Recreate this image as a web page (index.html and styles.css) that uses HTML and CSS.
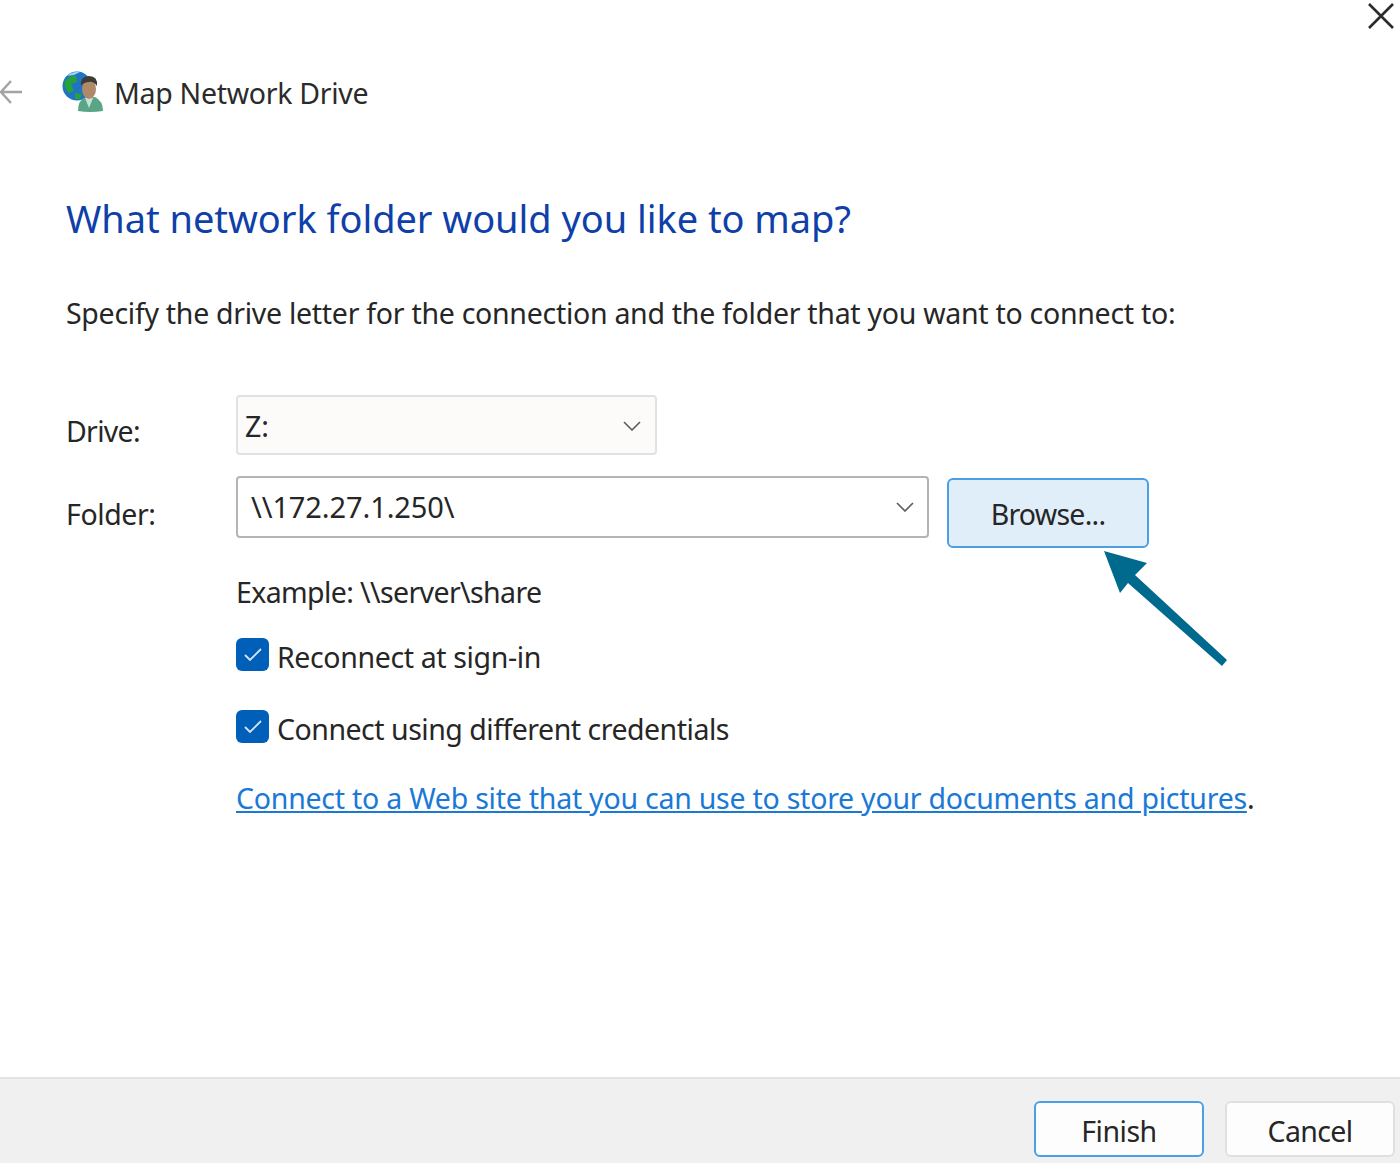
FILE: index.html
```html
<!DOCTYPE html>
<html lang="en">
<head>
<meta charset="utf-8">
<title>Map Network Drive</title>
<link rel="stylesheet" href="styles.css">
</head>
<body>
<div class="window">
  <div class="main">
    <div class="closebar">
      <svg class="close-icon" width="30" height="30" viewBox="0 0 30 30"><path d="M3 3 L27 27 M27 3 L3 27" fill="none" stroke="#2b2b2b" stroke-width="2.6"/></svg>
    </div>
    <div class="nav">
      <svg class="back-icon" width="24" height="28" viewBox="0 0 24 28"><path d="M22 14 H1 M11 3 L1 14 L11 25" fill="none" stroke="#a3a3a3" stroke-width="2.4"/></svg>
      <svg class="net-icon" width="42" height="42" viewBox="0 0 42 42">
        <circle cx="15" cy="15" r="14.5" fill="#1f74c4"/>
        <path d="M3 10 Q8 4 14 5 L15 11 L9 13 L12 20 L7 22 Q1 16 3 10Z M13 22 L20 23 L18 28 L13 28Z" fill="#27a13c"/>
        <path d="M5 5 Q11 0 18 1 L12 4Z" fill="#9fd0f0"/>
        <path d="M16 40 Q16 30 22 27 L33 26 Q41 30 41 40 Q28 42 16 40Z" fill="#5aa588"/>
        <path d="M23 27 L27 37 L31 27Z" fill="#c8e0d5"/>
        <ellipse cx="27" cy="18" rx="7" ry="10" fill="#b08a68"/>
        <path d="M19 15 Q18 5 27 5 Q36 5 35 15 Q31 10 27 11 Q22 11 19 15Z" fill="#3d3d38"/>
      </svg>
      <span class="nav-title">Map Network Drive</span>
    </div>
    <h1 class="heading">What network folder would you like to map?</h1>
    <p class="intro">Specify the drive letter for the connection and the folder that you want to connect to:</p>
    <div class="form">
      <label class="label label-drive">Drive:</label>
      <div class="select select-drive">
        <span class="select-value">Z:</span>
        <svg class="chevron" width="18" height="10" viewBox="0 0 18 10"><path d="M1 1 L9 9 L17 1" fill="none" stroke="#5c5c5c" stroke-width="1.6"/></svg>
      </div>
      <span></span>
      <label class="label label-folder">Folder:</label>
      <div class="select select-folder">
        <span class="select-value path">\\172.27.1.250\</span>
        <svg class="chevron" width="18" height="10" viewBox="0 0 18 10"><path d="M1 1 L9 9 L17 1" fill="none" stroke="#5c5c5c" stroke-width="1.6"/></svg>
      </div>
      <button class="btn btn-browse">Browse...</button>
    </div>
    <div class="options">
      <p class="example">Example: \\server\share</p>
      <div class="check-row check-first">
        <span class="check"><svg width="20" height="16" viewBox="0 0 20 16"><path d="M2 8 L7 13 L18 2" fill="none" stroke="#d5e4f5" stroke-width="1.8"/></svg></span>
        <span class="reconnect">Reconnect at sign-in</span>
      </div>
      <div class="check-row check-second">
        <span class="check"><svg width="20" height="16" viewBox="0 0 20 16"><path d="M2 8 L7 13 L18 2" fill="none" stroke="#d5e4f5" stroke-width="1.8"/></svg></span>
        <span class="credentials">Connect using different credentials</span>
      </div>
      <p class="link-line"><a class="link" href="#">Connect to a Web site that you can use to store your documents and pictures</a>.</p>
    </div>
    <svg class="arrow" width="130" height="120" viewBox="0 0 130 120">
      <path d="M1 2 L44 14 L32 26 L124 111 L119 117 L25 34 L17 44Z" fill="#006a8e"/>
    </svg>
  </div>
  <div class="footer">
    <button class="btn btn-finish">Finish</button>
    <button class="btn btn-cancel">Cancel</button>
  </div>
</div>
</body>
</html>
```

FILE: styles.css
```css
* { box-sizing: border-box; }
html, body { margin: 0; padding: 0; background: #fff; }
body {
  font-family: "Noto Sans", "Open Sans", "Liberation Sans", sans-serif;
  font-size: 28.5px;
  color: #262626;
}
.window {
  width: 1400px;
  height: 1163px;
  display: flex;
  flex-direction: column;
  overflow: hidden;
}
.main { flex: 1; position: relative; }
.closebar { display: flex; justify-content: flex-end; height: 32px; padding-right: 4px; }
.close-icon { margin-top: 1px; }
.nav { display: flex; align-items: center; height: 42px; margin-top: 39px; }
.back-icon { margin-right: 38px; }
.net-icon { margin-right: 10px; filter: blur(0.5px); }
.nav-title { font-size: 28.5px; letter-spacing: -0.3px; color: #2b2b2b; padding-top: 2px; }
.heading {
  margin: 79px 0 0;
  padding: 0 0 0 66px;
  font-weight: 400;
  font-size: 38px;
  letter-spacing: -0.05px;
  line-height: 52px;
  color: #0f3fa8;
}
.intro { margin: 49px 0 0 66px; font-size: 28.5px; letter-spacing: -0.28px; line-height: 40px; }
.form {
  display: grid;
  grid-template-columns: 170px 693px 220px;
  margin: 62px 0 0 66px;
}
.label { font-size: 28.5px; line-height: 40px; }
.label-drive { margin-top: 16px; letter-spacing: -0.7px; }
.label-folder { margin-top: 39px; letter-spacing: -0.4px; }
.select {
  display: flex;
  align-items: center;
  justify-content: space-between;
  background: #fff;
  border-radius: 4px;
}
.select-drive {
  width: 421px;
  height: 60px;
  background: #fcfbfa;
  border: 2px solid #e2e2e2;
  padding: 2px 14px 0 7px;
}
.select-folder {
  margin-top: 21px;
  height: 62px;
  border: 2px solid #b4b4b4;
  padding: 0 13px 0 13px;
}
.select-value { font-size: 28.5px; line-height: 40px; }
.path { font-size: 29px; letter-spacing: -0.1px; }
.btn {
  font-family: inherit;
  font-size: 28.5px;
  color: #262626;
  border-radius: 6px;
  padding: 0;
  background: #fdfdfd;
}
.btn-browse {
  margin: 23px 0 0 18px;
  width: 202px;
  height: 70px;
  padding-top: 2px;
  background: #e0eef9;
  border: 2px solid #4d9fe3;
  letter-spacing: -0.75px;
}
.options { margin: 0 0 0 236px; }
.example { margin: 0; padding-top: 24px; font-size: 28.5px; letter-spacing: -0.62px; line-height: 40px; }
.check-row { display: flex; align-items: center; gap: 8px; font-size: 28.5px; line-height: 40px; }
.reconnect { letter-spacing: -0.37px; }
.credentials { letter-spacing: -0.49px; }
.check-first { margin-top: 25px; }
.check-second { margin-top: 32px; }
.check {
  width: 33px;
  height: 33px;
  margin-bottom: 5px;
  border-radius: 6px;
  background: #005fb8;
  display: flex;
  align-items: center;
  justify-content: center;
}
.link-line { margin: 29px 0 0; font-size: 28.5px; letter-spacing: -0.24px; line-height: 40px; white-space: nowrap; }
.link { color: #1a79d6; text-decoration: underline; }
.arrow { position: absolute; left: 1103px; top: 549px; }
.footer {
  height: 86px;
  background: #f0f0f0;
  border-top: 2px solid #e4e4e4;
  display: flex;
  justify-content: flex-end;
  align-items: flex-start;
  gap: 21px;
  padding: 22px 5px 0 0;
}
.btn-finish { width: 170px; height: 56px; padding-top: 4px; border: 2px solid #4d9fe3; letter-spacing: -0.5px; }
.btn-cancel { width: 170px; height: 56px; padding-top: 4px; border: 2px solid #e0e0e0; letter-spacing: -0.66px; }
```
